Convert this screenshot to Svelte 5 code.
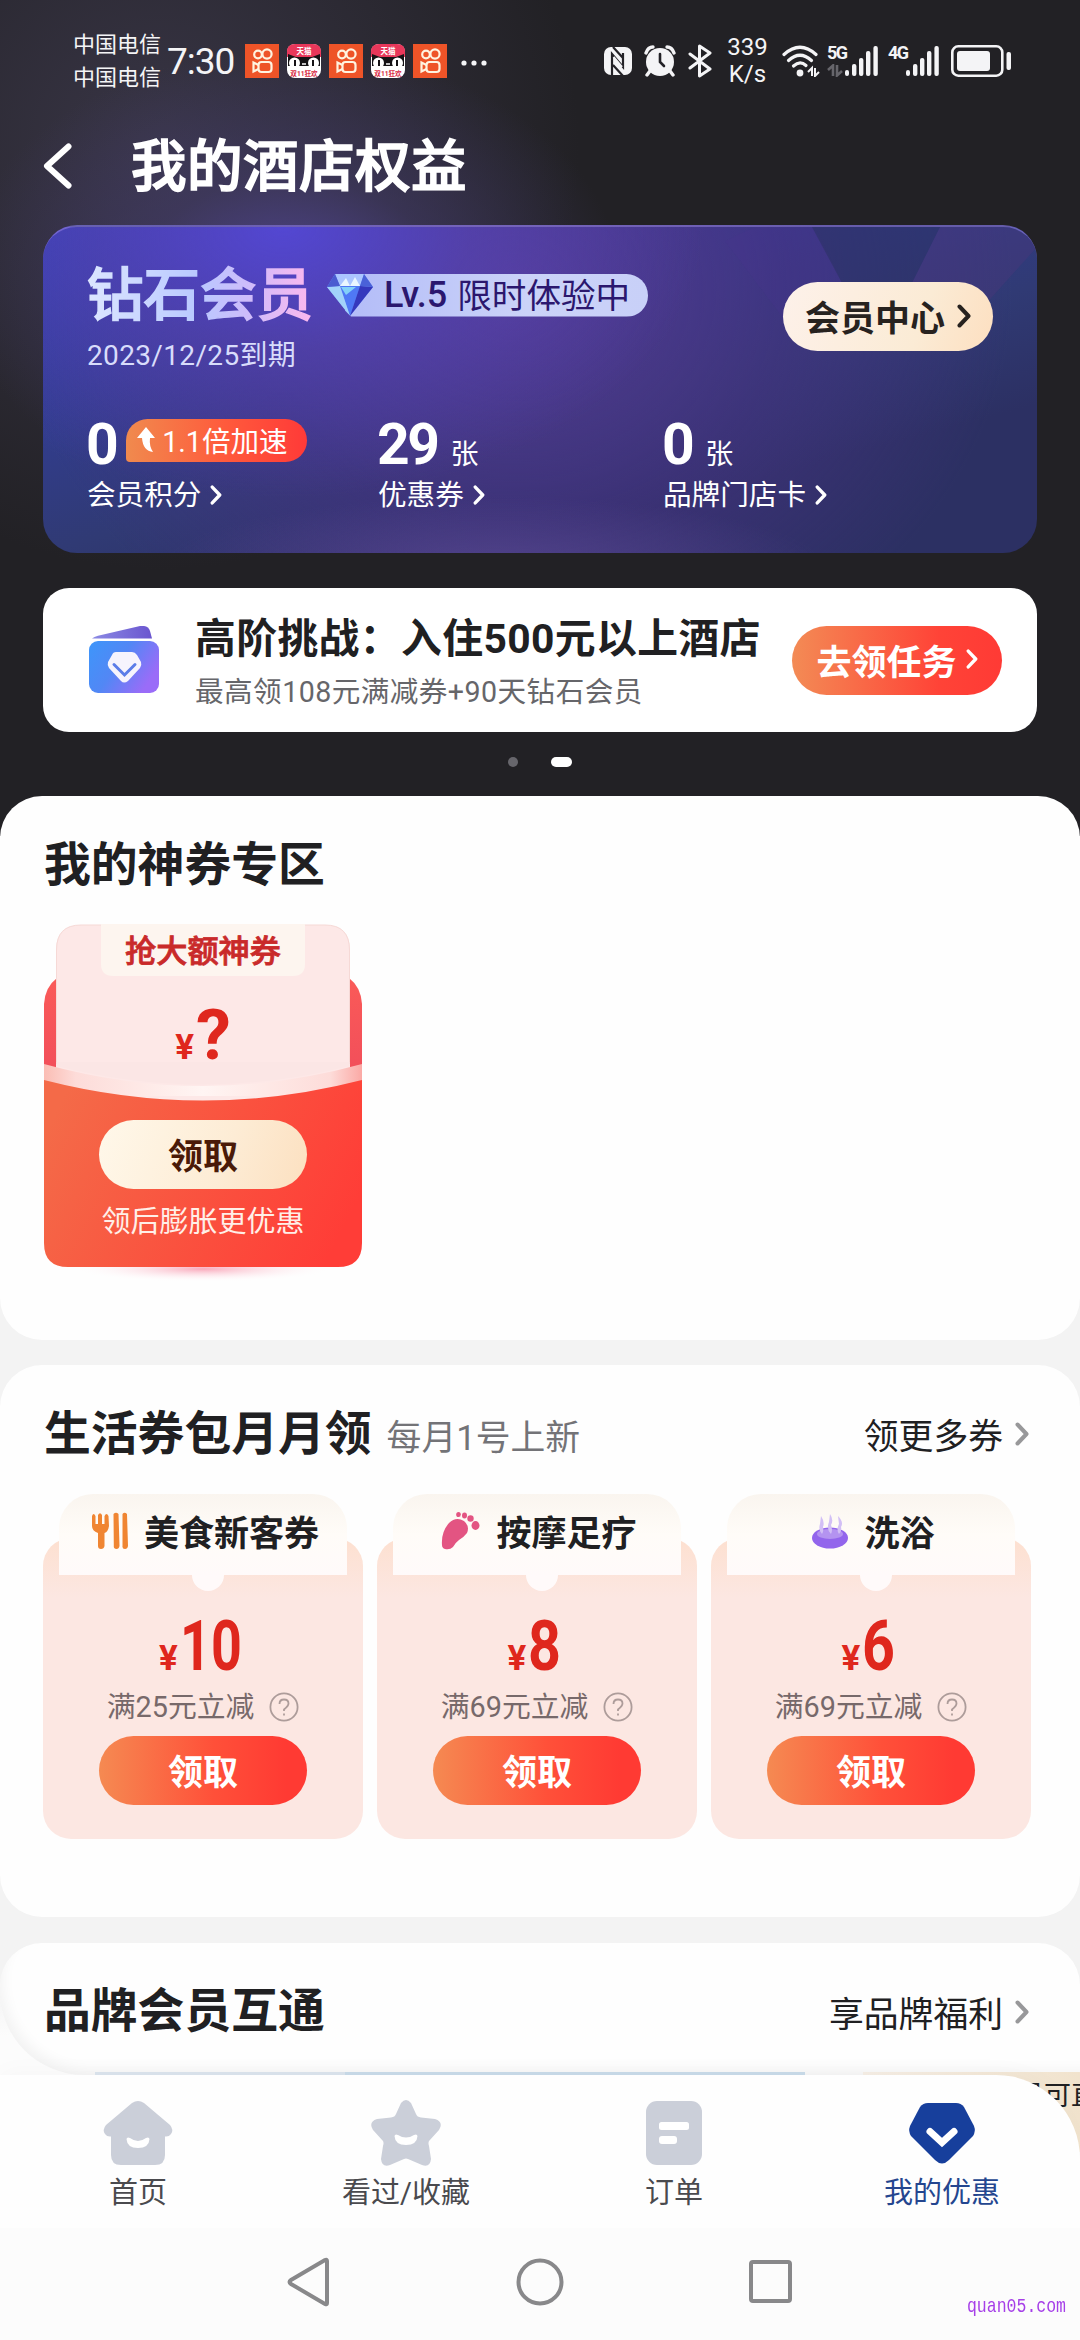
<script lang="ts">
  const stats = [
    { value: '0', unit: '', label: '会员积分', boost: '1.1倍加速' },
    { value: '29', unit: '张', label: '优惠券', boost: '' },
    { value: '0', unit: '张', label: '品牌门店卡', boost: '' }
  ];

  const coupons = [
    { icon: 'food', name: '美食新客券', amount: '10', rule: '满25元立减' },
    { icon: 'foot', name: '按摩足疗', amount: '8', rule: '满69元立减' },
    { icon: 'bath', name: '洗浴', amount: '6', rule: '满69元立减' }
  ];

  const tabs = [
    { icon: 'home', label: '首页' },
    { icon: 'star', label: '看过/收藏' },
    { icon: 'order', label: '订单' },
    { icon: 'mine', label: '我的优惠' }
  ];

  const notices = ['kuai', 'cat', 'kuai', 'cat', 'kuai'];
</script>

{#snippet chevron(cls)}
  <svg class="chevron {cls}" viewBox="0 0 14 24"><path d="M2.5 2.5 L11.5 12 L2.5 21.5" /></svg>
{/snippet}

{#snippet bars()}
  <svg class="bars" width="34" height="32" viewBox="0 0 34 32" fill="#f4f4f6">
    <rect x="0" y="25" width="4" height="6" rx="2" />
    <rect x="7" y="19" width="4.4" height="12" rx="2" />
    <rect x="14" y="13" width="4.4" height="18" rx="2" />
    <rect x="21" y="6" width="4.4" height="25" rx="2" />
    <rect x="28.4" y="1" width="4.4" height="30" rx="2" />
  </svg>
{/snippet}

<div class="screen">
  <header class="hero">
    <div class="status">
      <div class="carriers">
        <span>中国电信</span>
        <span>中国电信</span>
      </div>
      <div class="time">7:30</div>
      <div class="notices">
        {#each notices as n}
          {#if n === 'kuai'}
            <svg width="34" height="34" viewBox="0 0 34 34">
              <rect width="34" height="34" fill="#ee5428" />
              <g fill="none" stroke="#fff3e0" stroke-width="2.2">
                <circle cx="13" cy="10.5" r="3.8" />
                <circle cx="22" cy="10" r="4.6" />
                <rect x="13.500" y="18" width="13" height="10" rx="3" />
                <path d="M13.500 21 L8.500 18.500 V27.500 L13.500 25" />
              </g>
            </svg>
          {:else}
            <svg width="34" height="34" viewBox="0 0 34 34">
              <rect width="34" height="34" rx="8" fill="#fff" />
              <path d="M0 13 V8 Q0 0 8 0 H26 Q34 0 34 8 V13 Z" fill="#e8375a" />
              <path d="M1 10 L9 13 H25 L33 10 V22 H1 Z" fill="#151215" />
              <ellipse cx="7.500" cy="19" rx="5.500" ry="5.500" fill="#fff" />
              <ellipse cx="26.500" cy="19" rx="5.500" ry="5.500" fill="#fff" />
              <path d="M8 16 V22 M26 16 V22" stroke="#151215" stroke-width="2" />
              <path d="M15 20 H19" stroke="#fff" stroke-width="1.500" />
              <path d="M1 24 H33 V26 Q33 33 26 33 H8 Q1 33 1 26 Z" fill="#fff" />
              <text x="17" y="10" class="cat-top">天猫</text>
              <text x="17" y="31.500" class="cat-bottom">双11狂欢</text>
            </svg>
          {/if}
        {/each}
      </div>
      <svg class="more" width="26" height="6" viewBox="0 0 26 6" fill="#f4f4f6">
        <circle cx="3" cy="3" r="2.600" /><circle cx="13" cy="3" r="2.600" /><circle cx="23" cy="3" r="2.600" />
      </svg>

      <svg class="nfc" width="30" height="30" viewBox="0 0 30 30">
        <rect x="1" y="1" width="28" height="28" rx="7" fill="#f4f4f6" />
        <path d="M9 29 V8 L20 21 V7 M10 1 L20 12 M20 30 L10 19" fill="none" stroke="#232227" stroke-width="2.200" />
        <path d="M10.500 11 L19 21" stroke="#f4f4f6" stroke-width="2" />
      </svg>
      <svg class="alarm" width="32" height="32" viewBox="0 0 32 32">
        <circle cx="16" cy="17" r="14" fill="#f4f4f6" />
        <path d="M2 8 Q4 2 9 2 M30 8 Q28 2 23 2" fill="none" stroke="#f4f4f6" stroke-width="3.400" stroke-linecap="round" />
        <path d="M6 26 L3 30 M26 26 L29 30" stroke="#f4f4f6" stroke-width="3.400" stroke-linecap="round" />
        <path d="M16 9 V17 L20 21" fill="none" stroke="#232227" stroke-width="2.600" stroke-linecap="round" />
      </svg>
      <svg class="bt" width="24" height="34" viewBox="0 0 24 34" fill="none" stroke="#f4f4f6" stroke-width="3" stroke-linejoin="round" stroke-linecap="round">
        <path d="M2 10 L22 25 L11.500 32 V2 L22 9 L2 24" />
      </svg>
      <div class="speed"><span>339</span><span>K/s</span></div>
      <svg class="wifi" width="38" height="32" viewBox="0 0 38 32">
        <g fill="none" stroke="#f4f4f6" stroke-width="3.200" stroke-linecap="round">
          <path d="M2 9.500 Q18 -5 34 9.500" />
          <path d="M6.500 15.500 Q18 5 29.500 15.500" />
          <path d="M11.500 21 Q18 15 24 20.500" />
        </g>
        <circle cx="18" cy="28" r="3.400" fill="#f4f4f6" />
        <path d="M26 27 L30 23 V31 M33 23 V31 L37 27" fill="none" stroke="#f4f4f6" stroke-width="2" />
      </svg>
      <div class="net">
        <span>5G</span>
        <svg width="16" height="13" viewBox="0 0 16 13" fill="none" stroke="#66656b" stroke-width="2.600"><path d="M1 6 L6 1.500 V12 M10 1 V11.500 L15 7" /></svg>
      </div>
      {@render bars()}
      <div class="net second"><span>4G</span></div>
      {@render bars()}
      <svg class="battery" width="61" height="32" viewBox="0 0 61 32">
        <rect x="1.300" y="1.300" width="50" height="29.400" rx="6" fill="none" stroke="#f4f4f6" stroke-width="2.600" />
        <rect x="6" y="6" width="33" height="20" rx="3" fill="#f4f4f6" />
        <rect x="55.500" y="7" width="4.500" height="18" rx="2" fill="#f4f4f6" />
      </svg>
    </div>

    <div class="titlebar">
      <svg class="back" width="30" height="46" viewBox="0 0 30 46"><path d="M25.500 3.500 L4 23 L25.500 42.500" /></svg>
      <h1>我的酒店权益</h1>
    </div>

    <section class="member">
      <svg class="facets" viewBox="0 0 360 328" preserveAspectRatio="none">
        <path d="M48 14 L78 0 H138 L165 55 L110 96 Z" fill="#4a3490" opacity=".2" />
        <path d="M135 0 H263 L235 56 H165 Z" fill="#25305c" opacity=".45" />
        <path d="M263 0 H360 V20 L306 80 L235 56 Z" fill="#49387b" opacity=".45" />
      </svg>
      <div class="member-top">
        <div>
          <div class="rank">
            <span class="rank-name">钻石会员</span>
            <span class="level">
              <svg class="gem" width="48" height="44" viewBox="0 0 48 44">
                <path d="M9 1 H38 L47 14 L24 43 L1 14 Z" fill="#6f8df2" />
                <path d="M9 1 H38 L34 13 H14 Z" fill="#abc6ff" />
                <path d="M14 13 H34 L24 43 Z" fill="#4f78f5" />
                <path d="M1 14 L14 13 L24 43 Z" fill="#a2d3fa" />
                <path d="M34 13 L47 14 L24 43 Z" fill="#3538bd" />
                <path d="M38 1 L47 14 L34 13 Z" fill="#4a62d8" />
                <path d="M9 1 L14 13 L1 14 Z" fill="#4a5bd0" />
                <path d="M14 13 L20 5 L24 13 L29 4 L34 13 Z" fill="#e9f6ff" />
                <path d="M15 14 H30 L20 22 Z" fill="#8ee7fa" opacity=".8" />
              </svg>
              <b>Lv.5</b><span class="trial">限时体验中</span>
            </span>
          </div>
          <div class="expire">2023/12/25到期</div>
        </div>
        <button class="center">会员中心{@render chevron('dark')}</button>
      </div>
      <div class="stats">
        {#each stats as s}
          <div class="stat">
            <div class="stat-value">
              <b>{s.value}</b>
              {#if s.unit}<span class="unit">{s.unit}</span>{/if}
              {#if s.boost}
                <span class="boost">
                  <svg width="18" height="26" viewBox="0 0 18 26"><path d="M9 0 L18 11 H13 Q12 19 16 25 Q6 24 5 11 H0 Z" fill="#fff" /></svg>
                  {s.boost}
                </span>
              {/if}
            </div>
            <div class="stat-label">{s.label}{@render chevron('small')}</div>
          </div>
        {/each}
      </div>
    </section>

    <section class="challenge">
      <svg class="wallet" width="72" height="68" viewBox="0 0 72 68">
        <defs>
          <linearGradient id="wallet" x1="0" y1="0" x2="1" y2=".5">
            <stop offset="0" stop-color="#3d96fa" /><stop offset=".5" stop-color="#5287f5" /><stop offset="1" stop-color="#9a6cf8" />
          </linearGradient>
          <linearGradient id="flap" x1="0" y1="0" x2="1" y2="0">
            <stop offset="0" stop-color="#8b8ae4" /><stop offset="1" stop-color="#6a55cf" />
          </linearGradient>
        </defs>
        <path d="M4 12.500 Q6 11 10 9.800 L52 0 Q60 -1 62 5 L64 12.500 Z" fill="url(#flap)" />
        <rect x="1" y="15" width="70" height="52" rx="9" fill="url(#wallet)" />
        <path d="M28 26 H44 Q47 26 49 29 L53 36 Q54 39 52 42 L40 55 Q36 58 33 55 L21 42 Q19 39 20 36 L24 29 Q25 26 28 26 Z" fill="#f6f4fd" />
        <path d="M26 38.500 L36.500 49 L47 38.500" fill="none" stroke="#5b7de8" stroke-width="3" stroke-linecap="round" />
      </svg>
      <div class="challenge-text">
        <div class="challenge-title">高阶挑战：入住500元以上酒店</div>
        <div class="challenge-sub">最高领108元满减券+90天钻石会员</div>
      </div>
      <button class="go">去领任务{@render chevron('small')}</button>
    </section>

    <div class="dots"><i></i><i class="on"></i></div>
  </header>

  <main>
    <section class="panel magic">
      <h2>我的神券专区</h2>
      <div class="ticket">
        <svg class="ticket-bg" width="320" height="364" viewBox="0 0 320 364">
          <defs>
            <linearGradient id="red" x1="0" y1=".3" x2="1" y2=".6">
              <stop offset="0" stop-color="#f46a48" /><stop offset="1" stop-color="#ff3d37" />
            </linearGradient>
            <linearGradient id="side" x1="0" y1="0" x2="0" y2="1">
              <stop offset="0" stop-color="#fa5a58" /><stop offset="1" stop-color="#ef4b5b" />
            </linearGradient>
            <linearGradient id="rim" x1="0" y1="0" x2="1" y2="0">
              <stop offset="0" stop-color="#fbbdb4" /><stop offset=".1" stop-color="#fddcd9" /><stop offset=".5" stop-color="#fff5f3" /><stop offset=".9" stop-color="#fddcd9" /><stop offset="1" stop-color="#fba9a5" />
            </linearGradient>
            <radialGradient id="glow"><stop offset="0" stop-color="#f9a9bb" /><stop offset="1" stop-color="#fff" stop-opacity="0" /></radialGradient>
          </defs>
          <ellipse cx="160" cy="345" rx="130" ry="13" fill="url(#glow)" />
          <path d="M1 180 V80 Q2 63 14 54 H306 Q318 63 319 80 V180 Z" fill="url(#side)" />
          <path d="M13 180 V26 Q13 1 38 1 H282 Q307 1 307 26 V180 Z" fill="#fde8e7" />
          <path d="M13.500 140 V26 Q13.500 1 38 1 H282 Q306.500 1 306.500 26 V140" fill="none" stroke="#f6d9d6" />
          <path d="M58 0 H262 V40 Q262 52 250 52 H70 Q58 52 58 40 Z" fill="#fdf5ef" />
          <path d="M1 140 Q160 184 319 140 V172 H1 Z" fill="url(#rim)" />
          <path d="M13.500 138 H306.500 V142 Q160 179 13.500 142 Z" fill="#fbe6e5" />
          <path d="M1 156 Q160 197 319 156 V319 Q319 343 295 343 H25 Q1 343 1 319 Z" fill="url(#red)" />
        </svg>
        <div class="ticket-name">抢大额神券</div>
        <div class="price mystery"><small>¥</small>?</div>
        <button class="claim cream">领取</button>
        <div class="ticket-note">领后膨胀更优惠</div>
      </div>
    </section>

    <section class="panel life">
      <div class="panel-head">
        <h2>生活券包月月领</h2>
        <span class="hint">每月1号上新</span>
        <a class="link" href="#more">领更多券{@render chevron('grey')}</a>
      </div>
      <div class="coupons">
        {#each coupons as c}
          <article class="coupon">
            <div class="coupon-name">
              {#if c.icon === 'food'}
                <svg width="38" height="38" viewBox="0 0 38 38" fill="#f08532">
                  <path d="M1 4 Q2.500 0 4.500 4 V12 H7 V3 Q9 -.5 11 3 V12 H13.500 V4 Q15.500 0 17.500 4 L18 14 Q17 20 13.500 21 V34 Q13 37 10 37 Q7 37 7 34 V21 Q1 19 1 14 Z" />
                  <path d="M22.500 2 Q25 -.5 27.500 2 L28.500 34 Q28 37 25.500 37 Q22.500 37 22.800 34 Z M31.500 2 Q33.500 -.5 36 2 L37 34 Q36.500 37 34 37 Q31 37 31.500 34 Z" />
                </svg>
              {:else if c.icon === 'foot'}
                <svg width="40" height="40" viewBox="0 0 40 40" fill="#e35482">
                  <path d="M1 34 Q0 21 8 12 Q15 5 23 10 Q29 15 26 22 Q23 26 18 29 Q14 32 12 36 Q9 39 4 38 Q1 37 1 34 Z" />
                  <ellipse cx="17.500" cy="3.500" rx="2.300" ry="2.600" /><ellipse cx="23.500" cy="4.500" rx="2.500" ry="3" /><circle cx="29.500" cy="7.500" r="3.200" /><ellipse cx="34.500" cy="14.500" rx="4" ry="4.400" />
                </svg>
              {:else}
                <svg width="38" height="36" viewBox="0 0 38 36">
                  <ellipse cx="19" cy="25" rx="18" ry="10.500" fill="#9365ec" />
                  <ellipse cx="19" cy="21" rx="13" ry="5" fill="#b493f0" />
                  <path d="M10 3 Q14 9 12 14 Q13 18 11 21 Q7 17 9 11 Z M19 1 Q23 7 20 12 Q22 17 20 21 Q15 16 18 9 Z M27 3 Q33 9 30 14 Q31 18 28 21 Q25 17 28 11 Z" fill="#d2bff5" />
                </svg>
              {/if}
              <span>{c.name}</span>
            </div>
            <div class="price"><small>¥</small><span class="amount" class:wide={c.amount.length > 1}>{c.amount}</span></div>
            <div class="rule">
              {c.rule}
              <svg width="30" height="30" viewBox="0 0 30 30"><circle cx="15" cy="15" r="13.600" /><path d="M10.500 12 Q10.500 7.500 15 7.500 Q19.500 7.500 19.500 11.500 Q19.500 14 15 17.500 V19 M15 21.500 V23.500" /></svg>
            </div>
            <button class="claim hot">领取</button>
          </article>
        {/each}
      </div>
    </section>

    <section class="panel brand">
      <div class="panel-head">
        <h2>品牌会员互通</h2>
        <a class="link" href="#brand">享品牌福利{@render chevron('grey')}</a>
      </div>
      <div class="brand-cards">
        <div class="brand-blue"></div>
        <div class="brand-tan">员可直</div>
      </div>
    </section>
  </main>

  <footer>
    <nav>
      {#each tabs as t}
        <a href="#{t.icon}" class:active={t.icon === 'mine'}>
          <svg width="72" height="68" viewBox="0 0 72 68">
            {#if t.icon === 'home'}
              <path d="M30 4 Q36 0 42 4 L68 26 Q72 31 69 35 Q67 38 63 37.500 V56 Q63 66 53 66 H19 Q9 66 9 56 V37.500 Q5 38 3 35 Q0 31 4 26 Z" />
              <path d="M24.500 40 Q25 37.500 28 39 Q36 45 44 39 Q47 37.500 47.500 40 Q47 49 36 49 Q25 49 24.500 40 Z" fill="#fff" />
            {:else if t.icon === 'star'}
              <path d="M31 4 Q36 -2 41 4 L46 15 Q47 18 51 18.500 L65 20 Q74 23 69 31 L59 42 Q58 44 59 47 L61 60 Q60 69 52 66 L38 60 Q36 59 34 60 L20 66 Q12 69 11 60 L13 47 Q14 44 13 42 L3 31 Q-2 23 7 20 L21 18.500 Q25 18 26 15 Z" />
              <path d="M24.500 37 Q25 34.500 28 36 Q36 41 44 36 Q47 34.500 47.500 37 Q47 46 36 46 Q25 46 24.500 37 Z" fill="#fff" />
            {:else if t.icon === 'order'}
              <rect x="8" y="2" width="56" height="64" rx="11" />
              <rect x="21" y="23" width="30" height="8" rx="2.500" fill="#fff" /><rect x="21" y="37" width="18" height="8" rx="3" fill="#fff" />
            {:else}
              <path d="M22 4 H50 Q55 4 58 8 L68 27 Q70 32 67 37 L43 61 Q36 68 29 61 L5 37 Q2 32 4 27 L14 8 Q17 4 22 4 Z" />
              <path d="M24 32.500 L36 43.500 L48 32.500" fill="none" stroke="#fff" stroke-width="7" stroke-linecap="round" />
            {/if}
          </svg>
          <span>{t.label}</span>
        </a>
      {/each}
    </nav>
    <div class="system">
      <svg width="46" height="50" viewBox="0 0 46 50"><path d="M41 4 V46 Q41 48 39 47 L5 27 Q2 25 5 23 L39 3 Q41 2 41 4 Z" /></svg>
      <svg width="50" height="50" viewBox="0 0 50 50"><circle cx="25" cy="25" r="21.500" /></svg>
      <svg width="46" height="50" viewBox="0 0 46 50"><rect x="3" y="5" width="39" height="39" rx="2" /></svg>
      <span class="mark">quan05.com</span>
    </div>
  </footer>
</div>

<style>
  :global(body) {
    margin: 0;
    background: #f3f3f3;
  }

  .screen {
    width: 1080px;
    height: 2340px;
    overflow: hidden;
    display: flex;
    flex-direction: column;
    font-family: Roboto, 'Noto Sans CJK SC', sans-serif;
    color: #202022;
    white-space: nowrap;
  }

  svg {
    display: block;
    flex: none;
  }

  h1, h2 {
    margin: 0;
  }

  button {
    border: 0;
    padding: 0 0 2px;
    box-sizing: border-box;
    font-family: inherit;
    display: flex;
    align-items: center;
    justify-content: center;
  }

  a {
    color: inherit;
    text-decoration: none;
  }

  .hero {
    height: 836px;
    flex: none;
    box-sizing: border-box;
    background:
      radial-gradient(ellipse 330px 230px at 290px 280px, #504590 0%, rgba(68, 60, 110, .55) 45%, rgba(35, 34, 39, 0) 100%),
      radial-gradient(ellipse 420px 420px at 160px 150px, rgba(62, 58, 78, .8) 0%, rgba(35, 34, 39, 0) 100%),
      #222125;
  }

  .status {
    height: 122px;
    padding-left: 73px;
    display: flex;
    align-items: center;
    color: #f4f4f6;
  }
  .carriers {
    display: flex;
    flex-direction: column;
    font-size: 22px;
    line-height: 33px;
    width: 94px;
  }
  .time {
    font-size: 37px;
    width: 78px;
    letter-spacing: -1px;
  }
  .notices {
    display: flex;
    gap: 8px;
  }
  .cat-top, .cat-bottom {
    font-size: 7.5px;
    font-weight: 700;
    fill: #fff;
    text-anchor: middle;
  }
  .cat-bottom {
    font-size: 6.6px;
    fill: #d8263d;
  }
  .more {
    margin: 3px 116px 0 14px;
  }
  .alarm {
    margin: 0 12px 0 11px;
  }
  .speed {
    width: 41px;
    margin: 0 14px 0 15px;
    display: flex;
    flex-direction: column;
    align-items: center;
    font-size: 24px;
    line-height: 27px;
  }
  .net {
    width: 18px;
    height: 32px;
    margin-left: 7px;
    display: flex;
    flex-direction: column;
    gap: 4px;
    font-size: 18px;
    font-weight: 700;
    line-height: 15px;
    letter-spacing: -1.5px;
  }
  .net.second {
    margin-left: 9px;
  }
  .battery {
    margin-left: 11px;
  }

  .titlebar {
    height: 103px;
    padding: 0 43px;
    display: flex;
    align-items: center;
    gap: 58px;
    color: #fff;
  }
  .back {
    margin-top: -15px;
  }
  .back path {
    fill: none;
    stroke: #fff;
    stroke-width: 6;
    stroke-linecap: round;
    stroke-linejoin: round;
  }
  h1 {
    font-size: 55.5px;
    font-weight: 500;
    line-height: 80px;
    margin-top: -12px;
    letter-spacing: .5px;
    -webkit-text-stroke: 1.6px #fff;
  }

  .chevron {
    width: 14px;
    height: 24px;
    fill: none;
    stroke: currentColor;
    stroke-width: 4;
    stroke-linecap: round;
    stroke-linejoin: round;
  }
  .chevron.small {
    width: 12px;
    height: 20px;
    margin-left: 9px;
  }
  .chevron.dark {
    height: 26px;
    margin-left: 12px;
  }
  .chevron.grey {
    stroke: #98989a;
    margin-left: 12px;
  }

  .member {
    position: relative;
    box-sizing: border-box;
    width: 994px;
    height: 328px;
    margin: 0 43px;
    padding: 0 44px;
    border-radius: 34px;
    border-top: 2px solid rgba(150, 130, 230, .55);
    overflow: hidden;
    color: #fff;
    background:
      radial-gradient(ellipse 330px 70px at 450px 340px, rgba(92, 74, 150, .7), rgba(92, 74, 150, 0)),
      radial-gradient(ellipse 420px 270px at 240px 0, #5347d2 0%, rgba(88, 70, 190, .55) 45%, rgba(60, 50, 130, 0) 100%),
      radial-gradient(ellipse 500px 420px at 470px 60px, #523a90 0%, rgba(70, 50, 130, .6) 55%, rgba(45, 48, 97, 0) 100%),
      linear-gradient(165deg, #3440b4 0%, #303a74 55%, #2c3063 75%, #2c3063 100%);
  }
  .facets {
    position: absolute;
    top: 0;
    right: 0;
    width: 360px;
    height: 328px;
  }
  .member-top {
    position: relative;
    display: flex;
    justify-content: space-between;
    height: 188px;
  }
  .rank {
    display: flex;
    align-items: center;
    margin-top: 27px;
  }
  .rank-name {
    font-size: 56.5px;
    line-height: 80px;
    margin-top: 2px;
    margin-bottom: -2px;
    font-weight: 500;
    width: 240px;
    -webkit-text-stroke: 1.6px transparent;
    background: linear-gradient(90deg, #dce6ff 0, #b9c9ff 110px, #cdbcfb 160px, #fbb8ee 225px);
    background-clip: text;
    -webkit-background-clip: text;
    color: transparent;
  }
  .level {
    display: flex;
    align-items: center;
    height: 43px;
    width: 303px;
    margin: 2px 0 0 18px;
    border-radius: 4px 22px 22px 4px;
    background: linear-gradient(90deg, #b3bcf8, #cbd3f8 60%, #c8d0f8);
    color: #2b176e;
    font-size: 34.6px;
    clip-path: polygon(-20px 0, 100% 0, 100% 100%, 6px 100%, -20px 40%);
  }
  .level b {
    font-weight: 500;
    font-size: 36px;
    margin: 0 10px 0 10px;
  }
  .trial {
    margin-top: -4px;
  }
  .gem {
    margin-left: -19px;
  }
  .expire {
    font-size: 28px;
    line-height: 40px;
    margin-top: 2px;
    color: #d8dcfb;
    letter-spacing: .35px;
  }
  .center {
    width: 210px;
    height: 69px;
    margin-top: 55px;
    border-radius: 35px;
    font-size: 35px;
    font-weight: 700;
    color: #27221f;
    background: linear-gradient(110deg, #fdf1ea, #fbebd5 65%, #fddfc0);
  }

  .stats {
    position: relative;
    display: grid;
    grid-template-columns: 291px 285px auto;
  }
  .stat-value {
    display: flex;
    height: 60px;
    align-items: center;
  }
  .stat-value b {
    font-size: 57px;
    font-weight: 700;
    line-height: 60px;
    letter-spacing: -2.5px;
    margin-left: -1px;
  }
  .unit {
    font-size: 28px;
    margin: 13px 0 0 13px;
  }
  .boost {
    display: flex;
    align-items: center;
    gap: 7px;
    box-sizing: border-box;
    width: 181px;
    height: 43px;
    padding: 0 0 2px 11px;
    margin: -9px 0 0 10px;
    border-radius: 22px 22px 22px 4px;
    background: linear-gradient(90deg, #f08a4e, #ff5a3c 55%, #ff3a38);
    font-size: 28.6px;
  }
  .stat-label {
    display: flex;
    align-items: center;
    font-size: 28.6px;
    line-height: 40px;
  }

  .challenge {
    box-sizing: border-box;
    width: 994px;
    height: 144px;
    margin: 35px 43px 0;
    padding: 0 35px 0 45px;
    border-radius: 26px;
    background: #fff;
    display: flex;
    align-items: center;
  }
  .challenge-text {
    width: 597px;
    margin: 3px 0 0 35px;
  }
  .challenge-title {
    font-size: 40.8px;
    font-weight: 700;
    line-height: 54px;
    letter-spacing: .4px;
  }
  .challenge-sub {
    font-size: 28.6px;
    line-height: 40px;
    margin-top: 6px;
    color: #66666a;
    letter-spacing: .45px;
  }
  .go {
    width: 210px;
    height: 69px;
    flex: none;
    border-radius: 35px;
    font-size: 35px;
    font-weight: 700;
    color: #fff;
    background: linear-gradient(90deg, #f38b55, #ff4337 70%, #ff3a35);
  }
  .dots {
    display: flex;
    justify-content: center;
    gap: 33px;
    padding-top: 25px;
  }
  .dots i {
    width: 10px;
    height: 10px;
    border-radius: 5px;
    background: #67666c;
  }
  .dots .on {
    width: 21px;
    background: #fff;
  }

  main {
    margin-top: -40px;
    height: 1279px;
    flex: none;
    background: linear-gradient(transparent 40px, #f3f3f3 40px, #f3f3f3 1190px, #fcfcfc 1240px);
  }
  .panel {
    box-sizing: border-box;
    background: #fefefe;
    border-radius: 42px;
    padding: 0 44px;
  }
  h2 {
    font-size: 46.8px;
    line-height: 66px;
    font-weight: 700;
  }
  .magic {
    height: 544px;
    padding-top: 36px;
  }
  .ticket {
    position: relative;
    width: 318px;
    height: 364px;
    margin-top: 26px;
    display: flex;
    flex-direction: column;
    align-items: center;
  }
  .ticket-bg {
    position: absolute;
    left: -1px;
    top: 0;
  }
  .ticket > div, .ticket > button {
    position: relative;
  }
  .ticket-name {
    font-size: 31.2px;
    font-weight: 500;
    line-height: 50px;
    margin-top: 3px;
    color: #c92a2a;
    -webkit-text-stroke: .8px #c92a2a;
  }
  .price {
    display: flex;
    align-items: baseline;
    height: 70px;
    font-size: 70px;
    font-weight: 700;
    line-height: 70px;
    color: #df271d;
  }
  .price small {
    font-size: 35px;
    line-height: 35px;
    margin-right: 2px;
  }
  .amount {
    transform: scaleX(.82);
    transform-origin: left;
    margin-right: -7px;
  }
  .amount.wide {
    transform: scaleX(.77);
    margin-right: -18px;
  }
  .mystery {
    margin-top: 23px;
  }
  .claim {
    width: 208px;
    height: 69px;
    flex: none;
    border-radius: 35px;
    font-size: 35px;
    font-weight: 700;
  }
  .cream {
    margin-top: 50px;
    color: #4a1a08;
    background: linear-gradient(110deg, #fff8ea, #fdecd5 60%, #fce0c0);
  }
  .ticket-note {
    margin-top: 12px;
    font-size: 29px;
    line-height: 42px;
    color: #ffefe8;
  }

  .life {
    margin-top: 25px;
    height: 552px;
    padding-top: 36px;
  }
  .panel-head {
    display: flex;
    align-items: center;
  }
  .hint {
    font-size: 34.8px;
    margin: 1px 0 0 15px;
    color: #737377;
  }
  .link {
    margin: 0 7px 0 auto;
    font-size: 34.8px;
    display: flex;
    align-items: center;
  }
  .coupons {
    display: flex;
    gap: 14px;
    margin: 27px 0 0 -1px;
  }
  .coupon {
    position: relative;
    width: 320px;
    height: 345px;
    flex: none;
    display: flex;
    flex-direction: column;
    align-items: center;
  }
  .coupon::before {
    content: '';
    position: absolute;
    inset: 44px 0 0;
    border-radius: 28px;
    background: linear-gradient(#fde0d0 0, #fce7e2 60px);
  }
  .coupon-name {
    position: relative;
    box-sizing: border-box;
    width: 288px;
    height: 81px;
    border-radius: 34px 34px 0 0;
    display: flex;
    align-items: center;
    justify-content: center;
    gap: 15px;
    padding-left: 4px;
    background: linear-gradient(#faf5ef, #fffcf8 50%, #fffafa);
    font-size: 35px;
    font-weight: 700;
  }
  .coupon-name span, .coupon-name svg {
    margin-top: -8px;
  }
  .coupon-name::after {
    content: '';
    position: absolute;
    left: 133px;
    top: 80px;
    width: 32px;
    height: 17px;
    border-radius: 0 0 16px 16px;
    background: #fffafa;
  }
  .coupon > .price {
    position: relative;
    margin-top: 36px;
    margin-right: 5px;
  }
  .rule {
    position: relative;
    margin-top: 5px;
    display: flex;
    align-items: center;
    gap: 15px;
    font-size: 28.8px;
    line-height: 42px;
    color: #77696a;
  }
  .rule svg {
    fill: none;
    stroke: #ad9c9a;
    stroke-width: 1.8;
  }
  .hot {
    position: relative;
    margin-top: 8px;
    color: #fff;
    background: linear-gradient(90deg, #f58a52, #ff5039 55%, #ff3a33 90%);
  }

  .brand {
    margin-top: 26px;
    height: 132px;
    padding-top: 35px;
    border-radius: 42px 42px 0 84px;
    box-shadow: inset 8px -10px 14px -6px rgba(0, 0, 0, .05);
  }
  .brand .link {
    margin-top: 2px;
  }
  .brand-cards {
    display: flex;
    gap: 58px;
    height: 80px;
    margin: 28px -44px 0 51px;
  }
  .brand-blue {
    width: 710px;
    background: linear-gradient(90deg, #dbe4ed 250px, #c9dbe9 250px);
  }
  .brand-tan {
    width: 217px;
    flex: none;
    box-sizing: border-box;
    padding: 6px 0 0 154px;
    overflow: hidden;
    background: linear-gradient(90deg, #f5eee5, #f1e3cd);
    font-size: 27px;
    line-height: 36px;
  }

  footer {
    position: relative;
    flex: none;
    height: 265px;
    background: #fefefe;
    border-radius: 0 84px 0 0;
    box-shadow: 0 -4px 24px rgba(0, 0, 0, .025);
  }
  nav {
    display: grid;
    grid-template-columns: repeat(4, 268px);
    height: 153px;
    padding-left: 4px;
  }
  nav a {
    display: flex;
    flex-direction: column;
    align-items: center;
    padding-top: 24px;
    fill: #cbcfd9;
    font-size: 29px;
    line-height: 40px;
    color: #4a4a4e;
  }
  nav a span {
    margin-top: 6px;
  }
  nav .active {
    fill: #173f9c;
    color: #24468f;
  }
  .system {
    position: relative;
    display: flex;
    justify-content: center;
    gap: 183px;
    padding-top: 29px;
    height: 83px;
    background: #fcfcfc;
  }
  .system svg {
    fill: none;
    stroke: #88888a;
    stroke-width: 4;
  }
  .mark {
    position: absolute;
    right: 14px;
    bottom: 24px;
    font-family: 'Liberation Mono', monospace;
    font-size: 16.5px;
    color: #a640e8;
    transform: scaleY(1.25);
  }
</style>
